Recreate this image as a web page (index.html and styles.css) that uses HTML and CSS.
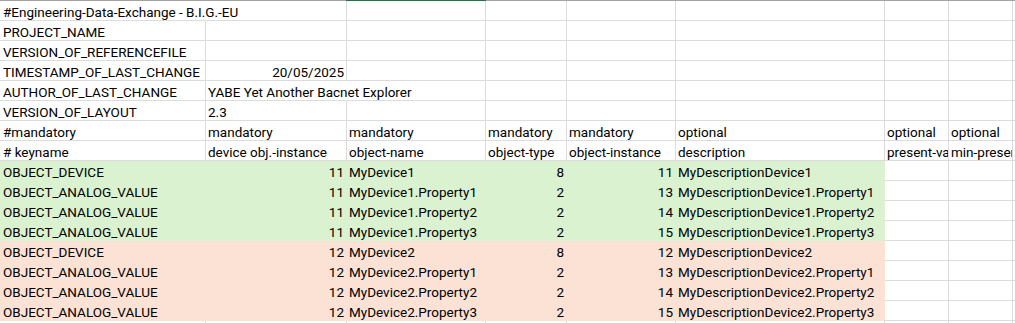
FILE: index.html
```html
<!DOCTYPE html>
<html>
<head>
<meta charset="utf-8">
<link rel="stylesheet" href="styles.css">
</head>
<body>
<div class="sheet">
  <div class="row edge">
    <div class="e"></div><div class="e"></div><div class="e sel"></div><div class="e"></div><div class="e"></div><div class="e"></div><div class="e"></div><div class="e"></div><div class="e"></div>
  </div>
  <div class="row">
    <div class="c a spill">#Engineering-Data-Exchange - B.I.G.-EU</div><div class="c"></div><div class="c"></div><div class="c"></div><div class="c"></div><div class="c"></div><div class="c"></div><div class="c"></div><div class="c"></div>
  </div>
  <div class="row">
    <div class="c a">PROJECT_NAME</div><div class="c"></div><div class="c"></div><div class="c"></div><div class="c"></div><div class="c"></div><div class="c"></div><div class="c"></div><div class="c"></div>
  </div>
  <div class="row">
    <div class="c a">VERSION_OF_REFERENCEFILE</div><div class="c"></div><div class="c"></div><div class="c"></div><div class="c"></div><div class="c"></div><div class="c"></div><div class="c"></div><div class="c"></div>
  </div>
  <div class="row">
    <div class="c a">TIMESTAMP_OF_LAST_CHANGE</div><div class="c n">20/05/2025</div><div class="c"></div><div class="c"></div><div class="c"></div><div class="c"></div><div class="c"></div><div class="c"></div><div class="c"></div>
  </div>
  <div class="row">
    <div class="c a">AUTHOR_OF_LAST_CHANGE</div><div class="c spill">YABE Yet Another Bacnet Explorer</div><div class="c"></div><div class="c"></div><div class="c"></div><div class="c"></div><div class="c"></div><div class="c"></div><div class="c"></div>
  </div>
  <div class="row">
    <div class="c a">VERSION_OF_LAYOUT</div><div class="c">2.3</div><div class="c"></div><div class="c"></div><div class="c"></div><div class="c"></div><div class="c"></div><div class="c"></div><div class="c"></div>
  </div>
  <div class="row">
    <div class="c a">#mandatory</div><div class="c">mandatory</div><div class="c">mandatory</div><div class="c">mandatory</div><div class="c">mandatory</div><div class="c">optional</div><div class="c">optional</div><div class="c">optional</div><div class="c"></div>
  </div>
  <div class="row">
    <div class="c a"># keyname</div><div class="c">device obj.-instance</div><div class="c">object-name</div><div class="c">object-type</div><div class="c">object-instance</div><div class="c">description</div><div class="c">present-value</div><div class="c">min-present-value</div><div class="c"></div>
  </div>

  <div class="row green">
    <div class="c a f">OBJECT_DEVICE</div><div class="c n f">11</div><div class="c f">MyDevice1</div><div class="c n f">8</div><div class="c n f">11</div><div class="c f">MyDescriptionDevice1</div><div class="c"></div><div class="c"></div><div class="c"></div>
  </div>
  <div class="row green">
    <div class="c a f">OBJECT_ANALOG_VALUE</div><div class="c n f">11</div><div class="c f">MyDevice1.Property1</div><div class="c n f">2</div><div class="c n f">13</div><div class="c f">MyDescriptionDevice1.Property1</div><div class="c"></div><div class="c"></div><div class="c"></div>
  </div>
  <div class="row green">
    <div class="c a f">OBJECT_ANALOG_VALUE</div><div class="c n f">11</div><div class="c f">MyDevice1.Property2</div><div class="c n f">2</div><div class="c n f">14</div><div class="c f">MyDescriptionDevice1.Property2</div><div class="c"></div><div class="c"></div><div class="c"></div>
  </div>
  <div class="row green">
    <div class="c a f">OBJECT_ANALOG_VALUE</div><div class="c n f">11</div><div class="c f">MyDevice1.Property3</div><div class="c n f">2</div><div class="c n f">15</div><div class="c f">MyDescriptionDevice1.Property3</div><div class="c"></div><div class="c"></div><div class="c"></div>
  </div>

  <div class="row peach">
    <div class="c a f">OBJECT_DEVICE</div><div class="c n f">12</div><div class="c f">MyDevice2</div><div class="c n f">8</div><div class="c n f">12</div><div class="c f">MyDescriptionDevice2</div><div class="c"></div><div class="c"></div><div class="c"></div>
  </div>
  <div class="row peach">
    <div class="c a f">OBJECT_ANALOG_VALUE</div><div class="c n f">12</div><div class="c f">MyDevice2.Property1</div><div class="c n f">2</div><div class="c n f">13</div><div class="c f">MyDescriptionDevice2.Property1</div><div class="c"></div><div class="c"></div><div class="c"></div>
  </div>
  <div class="row peach">
    <div class="c a f">OBJECT_ANALOG_VALUE</div><div class="c n f">12</div><div class="c f">MyDevice2.Property2</div><div class="c n f">2</div><div class="c n f">14</div><div class="c f">MyDescriptionDevice2.Property2</div><div class="c"></div><div class="c"></div><div class="c"></div>
  </div>
  <div class="row peach last">
    <div class="c a f">OBJECT_ANALOG_VALUE</div><div class="c n f">12</div><div class="c f">MyDevice2.Property3</div><div class="c n f">2</div><div class="c n f">15</div><div class="c f">MyDescriptionDevice2.Property3</div><div class="c"></div><div class="c"></div><div class="c"></div>
  </div>
  <div class="row">
    <div class="c a"></div><div class="c"></div><div class="c"></div><div class="c"></div><div class="c"></div><div class="c"></div><div class="c"></div><div class="c"></div><div class="c"></div>
  </div>
</div>
</body>
</html>
```

FILE: styles.css
```css
html, body {
  margin: 0;
  padding: 0;
  background: #ffffff;
  overflow: hidden;
}

.sheet {
  --cols: 206px 141px 139px 81px 109px 209px 64px 64px 1fr;
  width: 1015px;
  font-family: Roboto, "Liberation Sans", sans-serif;
  font-size: 13.5px;
  color: #000000;
}

.row {
  display: grid;
  grid-template-columns: var(--cols);
}

.edge {
  height: 1px;
}

.e {
  background: #a3a3a3;
}

.e.sel {
  background: #217346;
  margin-left: -1px;
}

.c {
  box-sizing: border-box;
  height: 20px;
  padding: 3px 2px 0 2px;
  line-height: 16px;
  border-right: 1px solid #dcdcdc;
  border-bottom: 1px solid #dcdcdc;
  white-space: nowrap;
  overflow: hidden;
}

.c.a {
  padding-left: 3px;
}

.c.n {
  text-align: right;
}

.c.spill {
  overflow: visible;
  border-right-color: transparent;
  position: relative;
  z-index: 1;
}

.green .f {
  background: #daf2d0;
  border-color: #daf2d0;
  overflow: visible;
}

.peach .f {
  background: #fbe2d5;
  border-color: #fbe2d5;
  overflow: visible;
}
```
